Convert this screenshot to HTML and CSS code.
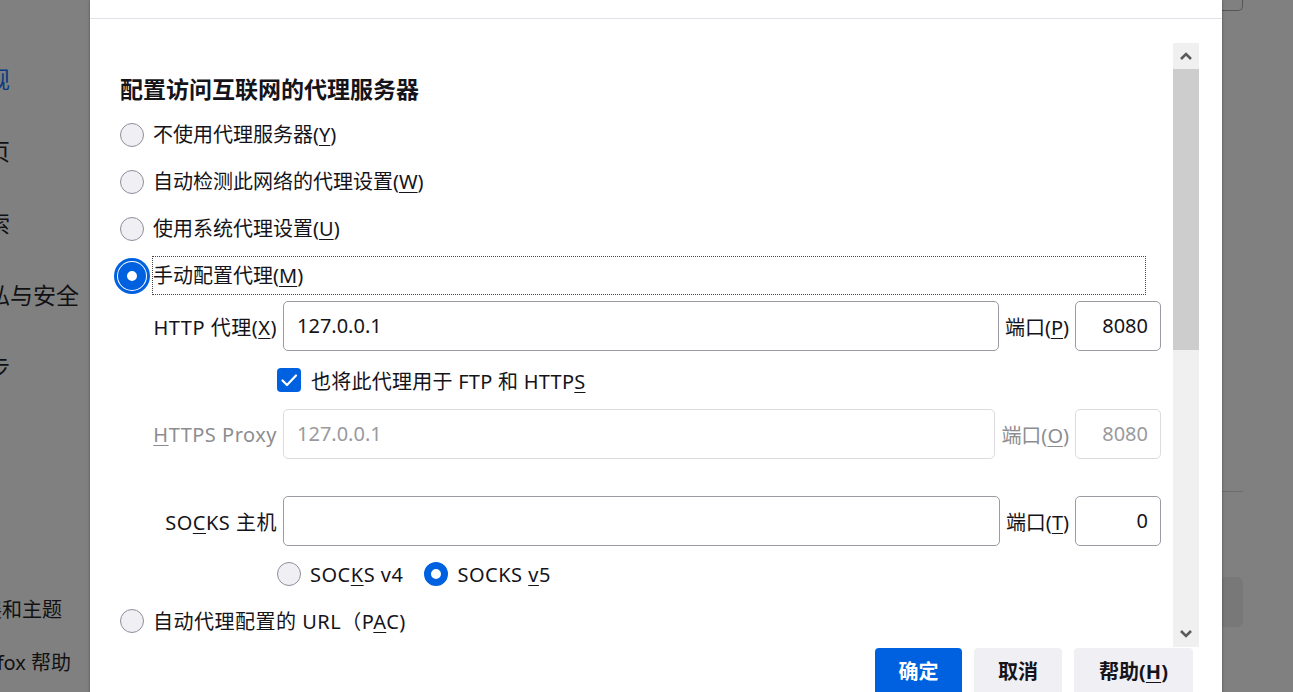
FILE: index.html
```html
<!DOCTYPE html>
<html lang="zh-CN">
<head>
<meta charset="utf-8">
<title>连接设置</title>
<link rel="stylesheet" href="styles.css">
</head>
<body>
<div class="page">
  <nav class="sidebar">
    <div class="cat active">常规</div>
    <div class="cat">主页</div>
    <div class="cat">搜索</div>
    <div class="cat">隐私与安全</div>
    <div class="cat">同步</div>
    <div class="foot foot-first">扩展和主题</div>
    <div class="foot">Firefox 帮助</div>
  </nav>

  <div class="dialog">
    <div class="dlg-top"></div>
    <div class="dlg-body">
      <div class="scrollbox">
        <div class="content">
          <h1 class="heading">配置访问互联网的代理服务器</h1>

          <div class="opt">
            <span class="radio"></span>
            <span class="opt-label">不使用代理服务器(<u>Y</u>)</span>
          </div>
          <div class="opt">
            <span class="radio"></span>
            <span class="opt-label">自动检测此网络的代理设置(<u>W</u>)</span>
          </div>
          <div class="opt">
            <span class="radio"></span>
            <span class="opt-label">使用系统代理设置(<u>U</u>)</span>
          </div>
          <div class="opt">
            <span class="radio on focus"></span>
            <span class="opt-label focused">手动配置代理(<u>M</u>)</span>
          </div>

          <div class="field-row first">
            <span class="f-label">HTTP 代理(<u>X</u>)</span>
            <div class="input">127.0.0.1</div>
            <span class="p-label">端口(<u>P</u>)</span>
            <div class="input port">8080</div>
          </div>

          <div class="check-row">
            <span class="checkbox">
              <svg width="24" height="24" viewBox="0 0 24 24"><polyline points="5.5,12.5 10,17 19,7.5" fill="none" stroke="#fff" stroke-width="2.2" stroke-linecap="round" stroke-linejoin="round"/></svg>
            </span>
            <span class="check-label">也将此代理用于 FTP 和 HTTP<u>S</u></span>
          </div>

          <div class="field-row disabled">
            <span class="f-label"><u>H</u>TTPS Proxy</span>
            <div class="input">127.0.0.1</div>
            <span class="p-label">端口(<u>O</u>)</span>
            <div class="input port">8080</div>
          </div>

          <div class="field-row socks">
            <span class="f-label">SO<u>C</u>KS 主机</span>
            <div class="input"></div>
            <span class="p-label">端口(<u>T</u>)</span>
            <div class="input port">0</div>
          </div>

          <div class="ver-row">
            <span class="radio"></span>
            <span class="ver-label">SOC<u>K</u>S v4</span>
            <span class="radio on"></span>
            <span class="ver-label">SOCKS <u>v</u>5</span>
          </div>

          <div class="opt pac">
            <span class="radio"></span>
            <span class="opt-label pac-label">自动代理配置的 URL（P<u>A</u>C)</span>
          </div>
        </div>

        <div class="scrollbar">
          <div class="sb-btn">
            <svg width="14" height="10" viewBox="0 0 14 10"><polyline points="2,8 7,3 12,8" fill="none" stroke="#5b5b5b" stroke-width="2.6"/></svg>
          </div>
          <div class="sb-thumb"></div>
          <div class="sb-track"></div>
          <div class="sb-btn">
            <svg width="14" height="10" viewBox="0 0 14 10"><polyline points="2,2 7,7 12,2" fill="none" stroke="#5b5b5b" stroke-width="2.6"/></svg>
          </div>
        </div>
      </div>

      <div class="buttons">
        <button class="btn primary w-ok">确定</button>
        <button class="btn w-cancel">取消</button>
        <button class="btn w-help">帮助(<u>H</u>)</button>
      </div>
    </div>
  </div>

  <div class="rightcol">
    <div class="rc-box"></div>
    <div class="rc-line"></div>
    <div class="rc-card"></div>
  </div>
</div>
</body>
</html>
```

FILE: styles.css
```css
html, body {
  margin: 0;
  padding: 0;
}
body {
  width: 1293px;
  height: 692px;
  overflow: hidden;
  background: #808080;
  font-family: "Noto Sans", "Noto Sans CJK SC", sans-serif;
  color: #15141a;
}
u {
  text-decoration: underline;
  text-decoration-thickness: 1px;
  text-underline-offset: 3px;
}

.page {
  display: flex;
  align-items: flex-start;
  width: 1293px;
  height: 692px;
  overflow: hidden;
}

/* ---------- background sidebar ---------- */
.sidebar {
  width: 90px;
  flex-shrink: 0;
  overflow: hidden;
  padding-top: 43px;
  display: flex;
  flex-direction: column;
}
.cat {
  flex-shrink: 0;
  height: 72px;
  line-height: 72px;
  font-size: 23px;
  margin-left: -36px;
  white-space: nowrap;
  color: #111113;
}
.cat.active {
  color: #0b3a80;
}
.foot {
  flex-shrink: 0;
  height: 53px;
  line-height: 53px;
  font-size: 20px;
  margin-left: -38px;
  white-space: nowrap;
  color: #111113;
}
.foot-first {
  margin-top: 180px;
}

/* ---------- dialog ---------- */
.dialog {
  width: 1132px;
  height: 720px;
  flex-shrink: 0;
  background: #fff;
  box-shadow: 0 0 3px rgba(0, 0, 0, 0.35);
  position: relative;
  z-index: 1;
  display: flex;
  flex-direction: column;
}
.dlg-top {
  flex-shrink: 0;
  height: 18px;
  border-bottom: 1px solid #e0e0e6;
}
.dlg-body {
  flex-shrink: 0;
  padding-top: 24px;
  display: flex;
  flex-direction: column;
}
.scrollbox {
  flex-shrink: 0;
  height: 604px;
  display: flex;
  padding-left: 30px;
  padding-right: 23px;
  overflow: hidden;
}
.content {
  flex: 1;
  margin-right: 12px;
  padding-top: 24px;
  box-sizing: border-box;
}
.heading {
  margin: 0;
  height: 44px;
  line-height: 44px;
  font-size: 23px;
  font-weight: 700;
  white-space: nowrap;
}

.opt {
  height: 47px;
  display: flex;
  align-items: center;
  gap: 8px;
}
.opt.pac {
  height: 38px;
}
.opt-label {
  font-size: 20px;
  line-height: 37px;
  height: 37px;
  border: 1px solid transparent;
  white-space: nowrap;
}
.opt-label.focused {
  flex: 1;
  margin-right: 15px;
  border: 1px dotted #444;
}
.pac-label {
  letter-spacing: 0.5px;
}

.radio {
  width: 24px;
  height: 24px;
  box-sizing: border-box;
  border-radius: 50%;
  border: 1px solid #8f8f9d;
  background: #f0f0f4;
  flex-shrink: 0;
}
.radio.on {
  border: 7px solid #0061e0;
  background: #fff;
}
.radio.focus {
  box-shadow: 0 0 0 2px #0061e0, 0 0 0 3px #fff, 0 0 0 6px #0061e0;
}

/* ---------- proxy fields ---------- */
.field-row {
  display: grid;
  grid-template-columns: 124px 1fr auto 86px;
  column-gap: 6px;
  align-items: center;
  height: 50px;
  margin-left: 33px;
  font-size: 20px;
}
.field-row.first {
  margin-top: 2px;
}
.field-row.socks {
  margin-top: 37px;
}
.f-label {
  text-align: right;
  white-space: nowrap;
  letter-spacing: 0.5px;
}
.p-label {
  white-space: nowrap;
}
.input {
  height: 50px;
  box-sizing: border-box;
  border: 1px solid #9b9ba3;
  border-radius: 5px;
  padding: 0 13px;
  line-height: 48px;
  font-size: 20px;
  white-space: nowrap;
  overflow: hidden;
  background: #fff;
}
.input.port {
  text-align: right;
  padding-right: 12px;
}
.field-row.disabled {
  color: #8d8d91;
}
.field-row.disabled .input {
  border-color: #dcdce0;
  color: #9a9a9e;
}

.check-row {
  height: 58px;
  display: flex;
  align-items: center;
  gap: 10px;
  padding-left: 157px;
  font-size: 20px;
}
.checkbox {
  width: 24px;
  height: 24px;
  border-radius: 4px;
  background: #0061e0;
  flex-shrink: 0;
  display: flex;
}
.check-label {
  white-space: nowrap;
  letter-spacing: 0.25px;
}

.ver-row {
  height: 56px;
  display: flex;
  align-items: center;
  padding-left: 157px;
  font-size: 20px;
}
.ver-label {
  margin-left: 9px;
  margin-right: 21px;
  white-space: nowrap;
  letter-spacing: 0.5px;
}

/* ---------- fake scrollbar ---------- */
.scrollbar {
  width: 26px;
  flex-shrink: 0;
  display: flex;
  flex-direction: column;
  background: #f0f0f0;
}
.sb-btn {
  height: 26px;
  display: flex;
  align-items: center;
  justify-content: center;
  flex-shrink: 0;
}
.sb-thumb {
  flex-shrink: 0;
  height: 281px;
  background: #cdcdcd;
}
.sb-track {
  flex: 1;
}

/* ---------- buttons ---------- */
.buttons {
  flex-shrink: 0;
  margin-top: 1px;
  display: flex;
  justify-content: flex-end;
  gap: 12px;
  padding-right: 29px;
}
.btn {
  height: 48px;
  border: none;
  border-radius: 4px;
  background: #f0f0f4;
  color: #15141a;
  font-family: "Noto Sans", "Noto Sans CJK SC", sans-serif;
  font-size: 20px;
  font-weight: 700;
  padding: 0;
  line-height: 46px;
}
.btn.primary {
  background: #0061e0;
  color: #fff;
}
.w-ok { width: 87px; }
.w-cancel { width: 88px; }
.w-help { width: 119px; }

/* ---------- background right column ---------- */
.rightcol {
  width: 71px;
  flex-shrink: 0;
  display: flex;
  flex-direction: column;
}
.rc-box {
  flex-shrink: 0;
  width: 20px;
  height: 10px;
  border-right: 1px solid #555;
  border-bottom: 1px solid #555;
  border-bottom-right-radius: 5px;
}
.rc-line {
  flex-shrink: 0;
  width: 21px;
  height: 1px;
  background: #6c6c6c;
  margin-top: 480px;
}
.rc-card {
  flex-shrink: 0;
  width: 21px;
  height: 50px;
  margin-top: 85px;
  background: #787878;
  border-radius: 0 6px 6px 0;
}
```
